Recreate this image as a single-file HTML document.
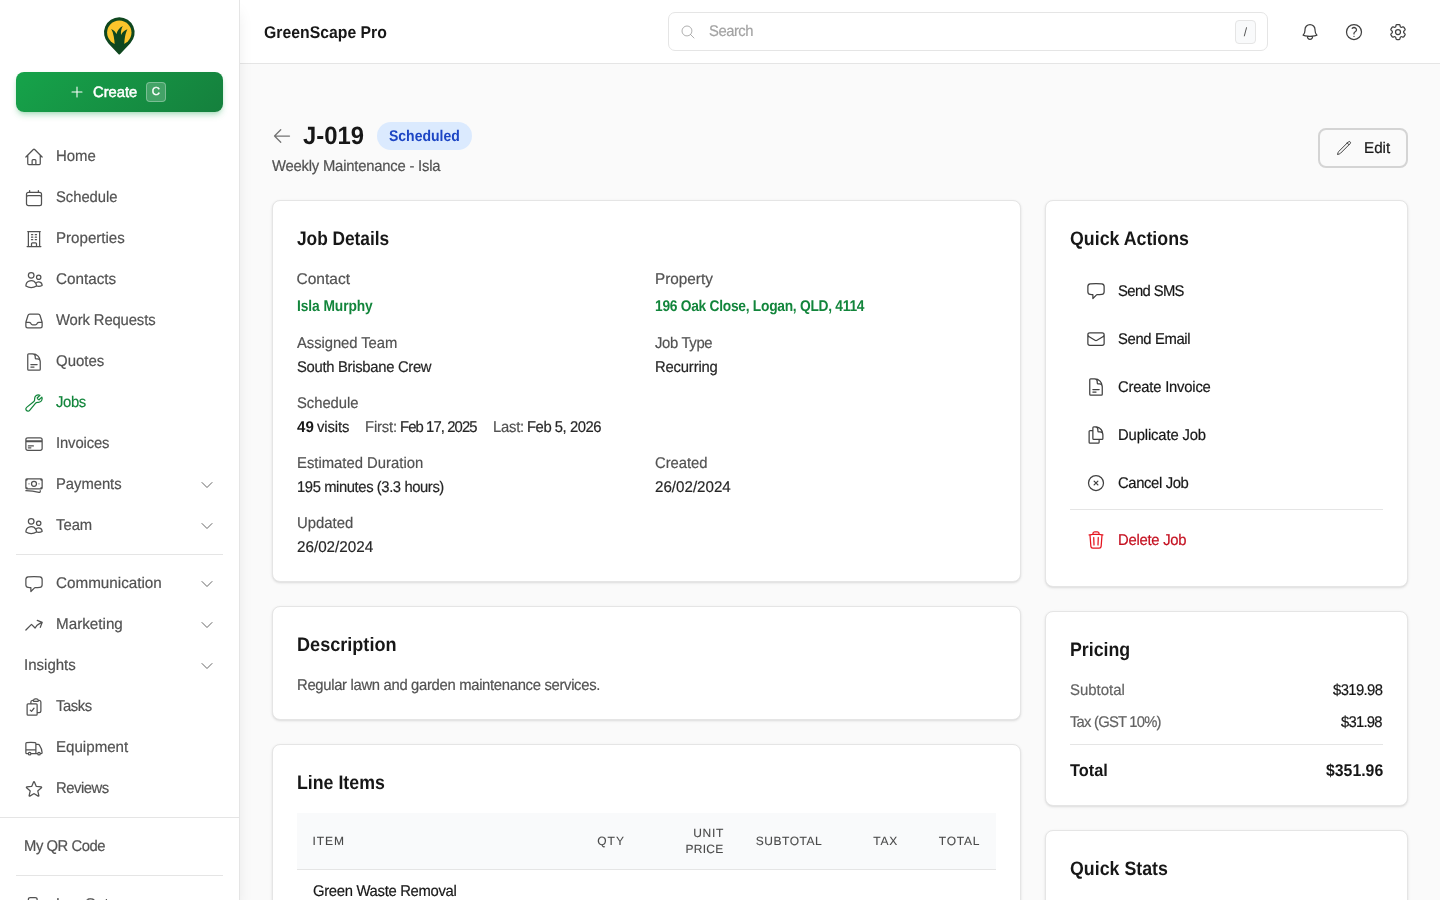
<!DOCTYPE html>
<html lang="en">
<head>
<meta charset="utf-8">
<title>J-019 - GreenScape Pro</title>
<style>
*{box-sizing:border-box;margin:0;padding:0}
html,body{width:1440px;height:900px;overflow:hidden;background:#fafafa}
body{position:relative;text-rendering:geometricPrecision;font-family:"Liberation Sans",sans-serif;color:#171717;font-size:15px;line-height:20px}
svg{display:block}
.ic{fill:none;stroke:currentColor;stroke-width:1.5;stroke-linecap:round;stroke-linejoin:round}
aside,header,main,section,nav,.abs{position:absolute}
.t{position:absolute;white-space:nowrap;-webkit-text-stroke:0.2px currentColor}
.b{-webkit-text-stroke-width:0}
#side{background:#fff;border-right:1px solid #e5e5e5;box-shadow:0 10px 15px -3px rgba(0,0,0,.1),0 4px 6px -4px rgba(0,0,0,.1);z-index:3}
#top{background:#fff;border-bottom:1px solid #e5e5e5;z-index:2}
#main{background:#fafafa;z-index:1;overflow:hidden}
.card{background:#fff;border:1px solid #e5e5e5;border-radius:8px;box-shadow:0 1px 3px 0 rgba(0,0,0,.1),0 1px 2px -1px rgba(0,0,0,.1)}
.hr{position:absolute;height:1px;background:#e5e5e5}
#create{border-radius:8px;background:linear-gradient(135deg,#16a34a 0%,#15803d 100%);box-shadow:0 4px 6px -1px rgba(22,163,74,.28),0 2px 4px -2px rgba(22,163,74,.25);color:#fff}
kbd{font-family:inherit}
h1,h2,h3{font-weight:400;font-size:inherit}
aside,header,main{will-change:transform}
</style>
</head>
<body>
<aside id="side" style="left:0px;top:0px;width:240px;height:900px;">
 <svg class="abs" style="left:96px;top:12px;width:48px;height:48px" viewBox="0 0 48 48"><path d="M23.300 5.300A15.300 15.300 0 0 0 12.260 31.190L22.600 42.200a1 1 0 0 0 1.400 0L34.340 31.190A15.300 15.300 0 0 0 23.300 5.300Z" fill="#0f471f"/><circle cx="23.300" cy="20.600" r="12.200" fill="#fbc52b"/><path d="M18.700 34.500C18.600 27 17.500 21 15.200 17.050c2.500 1 4.200 2.700 5.300 5.050C21.300 18.500 23.300 15.700 26.700 13.950c-1.500 2.900-2 5.800-1.650 8.950 1.300-2.500 3.300-4.400 6.400-5.600-2 3.800-3.100 9-3.200 17.200Z" fill="#0f471f"/></svg>
 <div id="create" class="abs" style="left:16px;top:72px;width:207px;height:40px;">
  <svg class="ic" viewBox="0 0 24 24" style="width:16px;height:16px;position:absolute;left:53px;top:12px;stroke-width:1.6;"><path d="M12 4.5v15m7.5-7.5h-15"/></svg>
  <div class="t" style="top:11px;font-size:15px;line-height:20px;-webkit-text-stroke-width:0.5px;color:#fff;left:76.95px;transform:scaleX(0.9822);transform-origin:0 50%;">Create</div>
  <kbd style="position:absolute;left:130px;top:10px;width:20px;height:20px;border-radius:4px;background:rgba(255,255,255,.2);border:1px solid rgba(255,255,255,.3);font-size:11.5px;line-height:18px;text-align:center;color:#fff;-webkit-text-stroke:0.3px #fff">C</kbd>
 </div>
 <svg class="ic" viewBox="0 0 24 24" style="width:20px;height:20px;position:absolute;left:24px;top:146.7px;color:#525252;"><path d="m2.25 12 8.954-8.955c.44-.439 1.152-.439 1.591 0L21.75 12M4.5 9.75v10.125c0 .621.504 1.125 1.125 1.125H9.750v-4.875c0-.621.504-1.125 1.125-1.125h2.250c.621 0 1.125.504 1.125 1.125V21h4.125c.621 0 1.125-.504 1.125-1.125V9.750M8.250 21h8.250"/></svg>
 <div class="t" style="top:146.5px;font-size:15.5px;line-height:20px;color:#525252;left:55.50px;transform:scaleX(0.9625);transform-origin:0 50%;">Home</div>
 <svg class="ic" viewBox="0 0 24 24" style="width:20px;height:20px;position:absolute;left:24px;top:187.7px;color:#525252;"><path d="M6.75 3v2.25M17.25 3v2.25M3 18.75V7.5a2.25 2.25 0 0 1 2.25-2.25h13.5A2.25 2.25 0 0 1 21 7.5v11.25m-18 0A2.25 2.25 0 0 0 5.25 21h13.5A2.25 2.25 0 0 0 21 18.75m-18 0v-7.5A2.25 2.25 0 0 1 5.25 9h13.5A2.25 2.25 0 0 1 21 11.25v7.5"/></svg>
 <div class="t" style="top:187.5px;font-size:15.5px;line-height:20px;letter-spacing:-0.04px;color:#525252;left:55.50px;transform:scaleX(0.955);transform-origin:0 50%;">Schedule</div>
 <svg class="ic" viewBox="0 0 24 24" style="width:20px;height:20px;position:absolute;left:24px;top:228.7px;color:#525252;"><path d="M3.75 21h16.5M4.5 3h15M5.25 3v18m13.5-18v18M9 6.75h1.5m-1.5 3h1.5m-1.5 3h1.5m3-6H15m-1.5 3H15m-1.5 3H15M9 21v-3.375c0-.621.504-1.125 1.125-1.125h3.75c.621 0 1.125.504 1.125 1.125V21"/></svg>
 <div class="t" style="top:228.5px;font-size:15.5px;line-height:20px;color:#525252;left:55.50px;transform:scaleX(0.9738);transform-origin:0 50%;">Properties</div>
 <svg class="ic" viewBox="0 0 24 24" style="width:20px;height:20px;position:absolute;left:24px;top:269.7px;color:#525252;"><path d="M15 19.128a9.38 9.38 0 0 0 2.625.372 9.337 9.337 0 0 0 4.121-.952 4.125 4.125 0 0 0-7.533-2.493M15 19.128v-.003c0-1.113-.285-2.16-.786-3.07M15 19.128v.106A12.318 12.318 0 0 1 8.624 21c-2.331 0-4.512-.645-6.374-1.766l-.001-.109a6.375 6.375 0 0 1 11.964-3.07M12 6.375a3.375 3.375 0 1 1-6.75 0 3.375 3.375 0 0 1 6.75 0Zm8.25 2.25a2.625 2.625 0 1 1-5.25 0 2.625 2.625 0 0 1 5.25 0Z"/></svg>
 <div class="t" style="top:269.5px;font-size:15.5px;line-height:20px;color:#525252;left:55.50px;transform:scaleX(0.9845);transform-origin:0 50%;">Contacts</div>
 <svg class="ic" viewBox="0 0 24 24" style="width:20px;height:20px;position:absolute;left:24px;top:310.7px;color:#525252;"><path d="M2.25 13.5h3.86a2.25 2.25 0 0 1 2.012 1.244l.256.512a2.25 2.25 0 0 0 2.013 1.244h3.218a2.25 2.25 0 0 0 2.013-1.244l.256-.512a2.25 2.25 0 0 1 2.013-1.244h3.859m-19.5.338V18a2.25 2.25 0 0 0 2.25 2.25h15A2.25 2.25 0 0 0 21.75 18v-4.162c0-.224-.034-.447-.1-.661L19.24 5.338a2.25 2.25 0 0 0-2.15-1.588H6.911a2.25 2.25 0 0 0-2.15 1.588L2.35 13.177a2.25 2.25 0 0 0-.1.661Z"/></svg>
 <div class="t" style="top:310.5px;font-size:15.5px;line-height:20px;letter-spacing:-0.12px;color:#525252;left:55.50px;transform:scaleX(0.955);transform-origin:0 50%;">Work Requests</div>
 <svg class="ic" viewBox="0 0 24 24" style="width:20px;height:20px;position:absolute;left:24px;top:351.7px;color:#525252;"><path d="M19.5 14.25v-2.625a3.375 3.375 0 0 0-3.375-3.375h-1.5A1.125 1.125 0 0 1 13.5 7.125v-1.5a3.375 3.375 0 0 0-3.375-3.375H8.25m0 12.75h7.5m-7.5 3H12M10.5 2.25H5.625c-.621 0-1.125.504-1.125 1.125v17.25c0 .621.504 1.125 1.125 1.125h12.75c.621 0 1.125-.504 1.125-1.125V11.25a9 9 0 0 0-9-9Z"/></svg>
 <div class="t" style="top:351.5px;font-size:15.5px;line-height:20px;color:#525252;left:55.50px;transform:scaleX(0.965);transform-origin:0 50%;">Quotes</div>
 <svg class="ic" viewBox="0 0 24 24" style="width:20px;height:20px;position:absolute;left:24px;top:392.7px;color:#12853b;"><path d="M21.75 6.75a4.5 4.5 0 0 1-4.884 4.484c-1.076-.091-2.264.071-2.95.904l-7.152 8.684a2.548 2.548 0 1 1-3.586-3.586l8.684-7.152c.833-.686.995-1.874.904-2.95a4.5 4.5 0 0 1 6.336-4.486l-3.276 3.276a3.004 3.004 0 0 0 2.25 2.25l3.276-3.276c.256.565.398 1.192.398 1.852Z"/></svg>
 <div class="t" style="top:392.5px;font-size:15.5px;line-height:20px;letter-spacing:-0.38px;color:#12853b;left:55.50px;transform:scaleX(0.955);transform-origin:0 50%;">Jobs</div>
 <svg class="ic" viewBox="0 0 24 24" style="width:20px;height:20px;position:absolute;left:24px;top:433.7px;color:#525252;"><path d="M2.25 8.25h19.5M2.25 9h19.5m-16.5 5.25h6m-6 2.25h3m-3.750 3h15a2.250 2.250 0 0 0 2.250-2.250V6.750A2.250 2.250 0 0 0 19.500 4.500h-15a2.250 2.250 0 0 0-2.250 2.250v10.500A2.250 2.250 0 0 0 4.500 19.500Z"/></svg>
 <div class="t" style="top:433.5px;font-size:15.5px;line-height:20px;letter-spacing:-0.12px;color:#525252;left:55.50px;transform:scaleX(0.955);transform-origin:0 50%;">Invoices</div>
 <svg class="ic" viewBox="0 0 24 24" style="width:20px;height:20px;position:absolute;left:24px;top:474.7px;color:#525252;"><path d="M2.25 18.75a60.07 60.07 0 0 1 15.797 2.101c.727.198 1.453-.342 1.453-1.096V18.75M3.75 4.5v.75A.75.75 0 0 1 3 6h-.75m0 0v-.375c0-.621.504-1.125 1.125-1.125H20.25M2.25 6v9m18-10.5v.75c0 .414.336.75.75.75h.75m-1.5-1.5h.375c.621 0 1.125.504 1.125 1.125v9.75c0 .621-.504 1.125-1.125 1.125h-.375m1.5-1.5H21a.75.75 0 0 0-.75.75v.75m0 0H3.75m0 0h-.375a1.125 1.125 0 0 1-1.125-1.125V15m1.5 1.500v-.750A.750.750 0 0 0 3 15h-.750M15 10.500a3 3 0 1 1-6 0 3 3 0 0 1 6 0Zm3 0h.008v.008H18V10.500Zm-12 0h.008v.008H6V10.500Z"/></svg>
 <div class="t" style="top:474.5px;font-size:15.5px;line-height:20px;letter-spacing:-0.04px;color:#525252;left:55.50px;transform:scaleX(0.955);transform-origin:0 50%;">Payments</div>
 <svg class="ic" viewBox="0 0 24 24" style="width:16px;height:16px;position:absolute;left:199px;top:476.8px;color:#666;"><path d="m19.5 8.25-7.5 7.5-7.5-7.5"/></svg>
 <svg class="ic" viewBox="0 0 24 24" style="width:20px;height:20px;position:absolute;left:24px;top:515.7px;color:#525252;"><path d="M15 19.128a9.38 9.38 0 0 0 2.625.372 9.337 9.337 0 0 0 4.121-.952 4.125 4.125 0 0 0-7.533-2.493M15 19.128v-.003c0-1.113-.285-2.16-.786-3.07M15 19.128v.106A12.318 12.318 0 0 1 8.624 21c-2.331 0-4.512-.645-6.374-1.766l-.001-.109a6.375 6.375 0 0 1 11.964-3.07M12 6.375a3.375 3.375 0 1 1-6.75 0 3.375 3.375 0 0 1 6.75 0Zm8.25 2.25a2.625 2.625 0 1 1-5.25 0 2.625 2.625 0 0 1 5.25 0Z"/></svg>
 <div class="t" style="top:515.5px;font-size:15.5px;line-height:20px;color:#525252;left:55.50px;transform:scaleX(0.9551);transform-origin:0 50%;">Team</div>
 <svg class="ic" viewBox="0 0 24 24" style="width:16px;height:16px;position:absolute;left:199px;top:517.8px;color:#666;"><path d="m19.5 8.25-7.5 7.5-7.5-7.5"/></svg>
 <svg class="ic" viewBox="0 0 24 24" style="width:20px;height:20px;position:absolute;left:24px;top:573.7px;color:#525252;"><path d="M2.25 12.76c0 1.6 1.123 2.994 2.707 3.227 1.087.16 2.185.283 3.293.369V21l4.076-4.076a1.526 1.526 0 0 1 1.037-.443 48.282 48.282 0 0 0 5.68-.494c1.584-.233 2.707-1.626 2.707-3.228V6.741c0-1.602-1.123-2.995-2.707-3.228A48.394 48.394 0 0 0 12 3c-2.392 0-4.744.175-7.043.513C3.373 3.746 2.25 5.14 2.25 6.741v6.018Z"/></svg>
 <div class="t" style="top:573.5px;font-size:15.5px;line-height:20px;color:#525252;left:55.50px;transform:scaleX(0.9824);transform-origin:0 50%;">Communication</div>
 <svg class="ic" viewBox="0 0 24 24" style="width:16px;height:16px;position:absolute;left:199px;top:575.8px;color:#666;"><path d="m19.5 8.25-7.5 7.5-7.5-7.5"/></svg>
 <svg class="ic" viewBox="0 0 24 24" style="width:20px;height:20px;position:absolute;left:24px;top:614.7px;color:#525252;"><path d="M2.25 18 9 11.25l4.306 4.306a11.95 11.95 0 0 1 5.814-5.518l2.74-1.22m0 0-5.94-2.281m5.94 2.28-2.28 5.941"/></svg>
 <div class="t" style="top:614.5px;font-size:15.5px;line-height:20px;color:#525252;left:55.50px;transform:scaleX(0.9816);transform-origin:0 50%;">Marketing</div>
 <svg class="ic" viewBox="0 0 24 24" style="width:16px;height:16px;position:absolute;left:199px;top:616.8px;color:#666;"><path d="m19.5 8.25-7.5 7.5-7.5-7.5"/></svg>
 <div class="t" style="top:655.5px;font-size:15.5px;line-height:20px;color:#525252;left:23.50px;transform:scaleX(0.97);transform-origin:0 50%;">Insights</div>
 <svg class="ic" viewBox="0 0 24 24" style="width:16px;height:16px;position:absolute;left:199px;top:657.8px;color:#666;"><path d="m19.5 8.25-7.5 7.5-7.5-7.5"/></svg>
 <svg class="ic" viewBox="0 0 24 24" style="width:20px;height:20px;position:absolute;left:24px;top:696.7px;color:#525252;"><path d="M11.35 3.836c-.065.21-.1.433-.1.664 0 .414.336.75.75.75h4.5a.75.75 0 0 0 .75-.75 2.25 2.25 0 0 0-.1-.664m-5.8 0A2.251 2.251 0 0 1 13.5 2.25H15c1.012 0 1.867.668 2.15 1.586m-5.8 0c-.376.023-.75.05-1.124.08C9.095 4.01 8.25 4.973 8.25 6.108V8.25m8.9-4.414c.376.023.75.05 1.124.08 1.131.094 1.976 1.057 1.976 2.192V16.5A2.25 2.25 0 0 1 18 18.75h-2.25m-7.5-10.5H4.875c-.621 0-1.125.504-1.125 1.125v11.25c0 .621.504 1.125 1.125 1.125h9.75c.621 0 1.125-.504 1.125-1.125V18.75m-7.5-10.5h6.375c.621 0 1.125.504 1.125 1.125v9.375m-8.25-3 1.5 1.5 3-3.75"/></svg>
 <div class="t" style="top:696.5px;font-size:15.5px;line-height:20px;letter-spacing:-0.42px;color:#525252;left:55.50px;transform:scaleX(0.955);transform-origin:0 50%;">Tasks</div>
 <svg class="ic" viewBox="0 0 24 24" style="width:20px;height:20px;position:absolute;left:24px;top:737.7px;color:#525252;"><path d="M8.25 18.75a1.5 1.5 0 0 1-3 0m3 0a1.5 1.5 0 0 0-3 0m3 0h6m-9 0H3.375a1.125 1.125 0 0 1-1.125-1.125V14.25m17.25 4.5a1.5 1.5 0 0 1-3 0m3 0a1.5 1.5 0 0 0-3 0m3 0h1.125c.621 0 1.129-.504 1.09-1.124a17.902 17.902 0 0 0-3.213-9.193 2.056 2.056 0 0 0-1.58-.86H14.25M16.5 18.75h-2.25m0-11.177v-.958c0-.568-.422-1.048-.987-1.106a48.554 48.554 0 0 0-10.026 0 1.106 1.106 0 0 0-.987 1.106v7.635m12-6.677v6.677m0 4.500v-4.500m0 0h-12"/></svg>
 <div class="t" style="top:737.5px;font-size:15.5px;line-height:20px;color:#525252;left:55.50px;transform:scaleX(0.9744);transform-origin:0 50%;">Equipment</div>
 <svg class="ic" viewBox="0 0 24 24" style="width:20px;height:20px;position:absolute;left:24px;top:778.7px;color:#525252;"><path d="M11.48 3.499a.562.562 0 0 1 1.04 0l2.125 5.111a.563.563 0 0 0 .475.345l5.518.442c.499.04.701.663.321.988l-4.204 3.602a.563.563 0 0 0-.182.557l1.285 5.385a.562.562 0 0 1-.84.61l-4.725-2.885a.562.562 0 0 0-.586 0L6.982 20.54a.562.562 0 0 1-.84-.61l1.285-5.386a.562.562 0 0 0-.182-.557l-4.204-3.602a.562.562 0 0 1 .321-.988l5.518-.442a.563.563 0 0 0 .475-.345L11.480 3.500Z"/></svg>
 <div class="t" style="top:778.5px;font-size:15.5px;line-height:20px;letter-spacing:-0.47px;color:#525252;left:55.50px;transform:scaleX(0.955);transform-origin:0 50%;">Reviews</div>
 <div class="t" style="top:836.5px;font-size:15.5px;line-height:20px;letter-spacing:-0.47px;color:#525252;left:23.50px;transform:scaleX(0.955);transform-origin:0 50%;">My QR Code</div>
 <svg class="ic" viewBox="0 0 24 24" style="width:20px;height:20px;position:absolute;left:24px;top:894.7px;color:#525252;"><path d="M15.75 9V5.25A2.25 2.25 0 0 0 13.5 3h-6a2.25 2.25 0 0 0-2.25 2.25v13.5A2.25 2.25 0 0 0 7.5 21h6a2.25 2.25 0 0 0 2.25-2.25V15m3 0 3-3m0 0-3-3m3 3H9"/></svg>
 <div class="t" style="top:894.5px;font-size:15.5px;line-height:20px;letter-spacing:-0.03px;color:#525252;left:55.50px;transform:scaleX(0.955);transform-origin:0 50%;">Log Out</div>
 <div style="position:absolute;left:16px;top:554px;width:207px;height:1px;background:#e5e5e5"></div>
 <div style="position:absolute;left:0px;top:817px;width:239px;height:1px;background:#e5e5e5"></div>
 <div style="position:absolute;left:16px;top:875px;width:207px;height:1px;background:#e5e5e5"></div>
</aside>
<header id="top" style="left:240px;top:0px;width:1200px;height:64px;">
 <div class="t" style="top:20.8px;font-size:17px;line-height:24px;font-weight:700;-webkit-text-stroke-width:0;left:23.80px;transform:scaleX(0.9289);transform-origin:0 50%;">GreenScape Pro</div>
 <div class="abs" style="left:428px;top:12px;width:600px;height:39px;border:1px solid #e5e5e5;border-radius:7px;background:#fff;">
  <svg class="ic" viewBox="0 0 24 24" style="width:16px;height:16px;position:absolute;left:11px;top:11px;color:#a3a3a3;stroke-width:1.3;"><path d="m21 21-5.197-5.197m0 0A7.5 7.5 0 1 0 5.196 5.196a7.5 7.5 0 0 0 10.607 10.607Z"/></svg>
  <div class="t" style="top:8.8px;font-size:15.5px;line-height:20px;letter-spacing:-0.5px;color:#a3a3a3;left:39.80px;transform:scaleX(0.955);transform-origin:0 50%;">Search</div>
  <kbd style="position:absolute;left:566px;top:7px;width:21px;height:24px;border:1px solid #e5e5e5;border-radius:4px;background:#f9fafb;font-size:12px;line-height:22px;text-align:center;color:#525252">/</kbd>
 </div>
 <svg class="ic" viewBox="0 0 24 24" style="width:20px;height:20px;position:absolute;left:1060px;top:22px;color:#404040;"><path d="M14.857 17.082a23.848 23.848 0 0 0 5.454-1.31A8.967 8.967 0 0 1 18 9.75V9A6 6 0 0 0 6 9v.75a8.967 8.967 0 0 1-2.312 6.022c1.733.64 3.56 1.085 5.455 1.31m5.714 0a24.255 24.255 0 0 1-5.714 0m5.714 0a3 3 0 1 1-5.714 0"/></svg>
 <svg class="ic" viewBox="0 0 24 24" style="width:20px;height:20px;position:absolute;left:1104px;top:22px;color:#404040;"><path d="M9.879 7.519c1.171-1.025 3.071-1.025 4.242 0 1.172 1.025 1.172 2.687 0 3.712-.203.179-.43.326-.67.442-.745.361-1.45.999-1.45 1.827v.75M21 12a9 9 0 1 1-18 0 9 9 0 0 1 18 0Zm-9 5.25h.008v.008H12v-.008Z"/></svg>
 <svg class="ic" viewBox="0 0 24 24" style="width:20px;height:20px;position:absolute;left:1148px;top:22px;color:#404040;"><path d="M9.594 3.94c.09-.542.56-.94 1.11-.94h2.593c.55 0 1.02.398 1.11.94l.213 1.281c.063.374.313.686.645.87.074.04.147.083.22.127.325.196.72.257 1.075.124l1.217-.456a1.125 1.125 0 0 1 1.37.49l1.296 2.247a1.125 1.125 0 0 1-.26 1.431l-1.003.827c-.293.241-.438.613-.43.992a7.723 7.723 0 0 1 0 .255c-.008.378.137.75.43.991l1.004.827c.424.35.534.955.26 1.43l-1.298 2.247a1.125 1.125 0 0 1-1.369.491l-1.217-.456c-.355-.133-.75-.072-1.076.124a6.470 6.470 0 0 1-.22.128c-.331.183-.581.495-.644.869l-.213 1.281c-.09.543-.56.940-1.110.940h-2.594c-.550 0-1.019-.398-1.110-.940l-.213-1.281c-.062-.374-.312-.686-.644-.870a6.520 6.520 0 0 1-.220-.127c-.325-.196-.720-.257-1.076-.124l-1.217.456a1.125 1.125 0 0 1-1.369-.490l-1.297-2.247a1.125 1.125 0 0 1 .260-1.431l1.004-.827c.292-.240.437-.613.430-.991a6.932 6.932 0 0 1 0-.255c.007-.380-.138-.751-.430-.992l-1.004-.827a1.125 1.125 0 0 1-.260-1.430l1.297-2.247a1.125 1.125 0 0 1 1.370-.491l1.216.456c.356.133.751.072 1.076-.124.072-.044.146-.086.220-.128.332-.183.582-.495.644-.869l.214-1.280Z M15 12a3 3 0 1 1-6 0 3 3 0 0 1 6 0Z"/></svg>
</header>
<main id="main" style="left:240px;top:64px;width:1200px;height:836px;">
 <svg class="ic" viewBox="0 0 24 24" style="width:20px;height:20px;position:absolute;left:32px;top:62px;color:#737373;"><path d="M10.5 19.5 3 12m0 0 7.5-7.5M3 12h18"/></svg>
 <h1 class="t" style="top:56.2px;font-size:25px;line-height:32px;font-weight:700;-webkit-text-stroke-width:0;left:63.20px;transform:scaleX(0.9539);transform-origin:0 50%;">J-019</h1>
 <div style="position:absolute;left:137px;top:58px;width:95px;height:28px;border-radius:14px;background:#dbeafe"></div>
 <div class="t" style="top:62.8px;font-size:15.5px;line-height:20px;font-weight:700;-webkit-text-stroke-width:0;color:#1c45c4;left:148.70px;transform:scaleX(0.9031);transform-origin:0 50%;">Scheduled</div>
 <div class="t" style="top:92.8px;font-size:15.5px;line-height:20px;letter-spacing:-0.21px;color:#525252;left:32.30px;transform:scaleX(0.955);transform-origin:0 50%;">Weekly Maintenance - Isla</div>
 <div class="abs" style="left:1078px;top:64px;width:90px;height:40px;border:2px solid #d4d4d4;border-radius:8px;background:#fafafa;">
  <svg class="ic" viewBox="0 0 24 24" style="width:16px;height:16px;position:absolute;left:16px;top:10px;color:#404040;"><path d="m16.862 4.487 1.687-1.688a1.875 1.875 0 1 1 2.652 2.652L6.832 19.82a4.5 4.5 0 0 1-1.897 1.13l-2.685.8.8-2.685a4.5 4.5 0 0 1 1.13-1.897L16.863 4.487Zm0 0L19.5 7.125"/></svg>
  <div class="t" style="top:8.8px;font-size:15.5px;line-height:20px;color:#171717;left:43.80px;transform:scaleX(0.9813);transform-origin:0 50%;">Edit</div>
 </div>
 <section class="card" style="left:32px;top:136px;width:749px;height:382px;">
  <h2 class="t" style="top:25.8px;font-size:19.5px;line-height:24px;letter-spacing:-0.05px;font-weight:700;-webkit-text-stroke-width:0;left:23.50px;transform:scaleX(0.89);transform-origin:0 50%;">Job Details</h2>
  <div class="t" style="top:68.8px;font-size:15.5px;line-height:20px;letter-spacing:0.02px;color:#525252;left:23.50px;">Contact</div>
  <div class="t" style="top:95.8px;font-size:15.5px;line-height:20px;letter-spacing:-0.1px;font-weight:700;-webkit-text-stroke-width:0;color:#12853b;left:23.50px;transform:scaleX(0.89);transform-origin:0 50%;">Isla Murphy</div>
  <div class="t" style="top:68.8px;font-size:15.5px;line-height:20px;color:#525252;left:381.50px;transform:scaleX(0.9863);transform-origin:0 50%;">Property</div>
  <div class="t" style="top:95.8px;font-size:15.5px;line-height:20px;letter-spacing:-0.31px;font-weight:700;-webkit-text-stroke-width:0;color:#12853b;left:381.50px;transform:scaleX(0.89);transform-origin:0 50%;">196 Oak Close, Logan, QLD, 4114</div>
  <div class="t" style="top:132.8px;font-size:15.5px;line-height:20px;letter-spacing:-0.06px;color:#525252;left:23.50px;transform:scaleX(0.955);transform-origin:0 50%;">Assigned Team</div>
  <div class="t" style="top:156.8px;font-size:15.5px;line-height:20px;letter-spacing:-0.31px;color:#262626;left:23.50px;transform:scaleX(0.955);transform-origin:0 50%;">South Brisbane Crew</div>
  <div class="t" style="top:132.8px;font-size:15.5px;line-height:20px;letter-spacing:-0.34px;color:#525252;left:381.50px;transform:scaleX(0.955);transform-origin:0 50%;">Job Type</div>
  <div class="t" style="top:156.8px;font-size:15.5px;line-height:20px;letter-spacing:-0.18px;color:#262626;left:381.50px;transform:scaleX(0.955);transform-origin:0 50%;">Recurring</div>
  <div class="t" style="top:192.8px;font-size:15.5px;line-height:20px;letter-spacing:-0.04px;color:#525252;left:23.50px;transform:scaleX(0.955);transform-origin:0 50%;">Schedule</div>
  <div class="t" style="top:216.8px;font-size:15.5px;line-height:20px;font-weight:700;-webkit-text-stroke-width:0;color:#171717;left:23.50px;transform:scaleX(0.9739);transform-origin:0 50%;">49</div>
  <div class="t" style="top:216.8px;font-size:15.5px;line-height:20px;letter-spacing:-0.08px;color:#262626;left:43.80px;transform:scaleX(0.955);transform-origin:0 50%;">visits</div>
  <div class="t" style="top:216.8px;font-size:15.5px;line-height:20px;letter-spacing:-0.17px;color:#525252;left:92.20px;transform:scaleX(0.955);transform-origin:0 50%;">First:</div>
  <div class="t" style="top:216.8px;font-size:15.5px;line-height:20px;letter-spacing:-0.93px;color:#262626;left:126.80px;transform:scaleX(0.955);transform-origin:0 50%;">Feb 17, 2025</div>
  <div class="t" style="top:216.8px;font-size:15.5px;line-height:20px;letter-spacing:-0.23px;color:#525252;left:219.80px;transform:scaleX(0.955);transform-origin:0 50%;">Last:</div>
  <div class="t" style="top:216.8px;font-size:15.5px;line-height:20px;letter-spacing:-0.47px;color:#262626;left:253.50px;transform:scaleX(0.955);transform-origin:0 50%;">Feb 5, 2026</div>
  <div class="t" style="top:252.8px;font-size:15.5px;line-height:20px;color:#525252;left:23.50px;transform:scaleX(0.9575);transform-origin:0 50%;">Estimated Duration</div>
  <div class="t" style="top:276.8px;font-size:15.5px;line-height:20px;letter-spacing:-0.43px;color:#262626;left:23.50px;transform:scaleX(0.955);transform-origin:0 50%;">195 minutes (3.3 hours)</div>
  <div class="t" style="top:252.8px;font-size:15.5px;line-height:20px;letter-spacing:-0.03px;color:#525252;left:381.50px;transform:scaleX(0.955);transform-origin:0 50%;">Created</div>
  <div class="t" style="top:276.8px;font-size:15.5px;line-height:20px;color:#262626;left:381.50px;transform:scaleX(0.9768);transform-origin:0 50%;">26/02/2024</div>
  <div class="t" style="top:312.8px;font-size:15.5px;line-height:20px;color:#525252;left:23.50px;transform:scaleX(0.959);transform-origin:0 50%;">Updated</div>
  <div class="t" style="top:336.8px;font-size:15.5px;line-height:20px;color:#262626;left:23.50px;transform:scaleX(0.982);transform-origin:0 50%;">26/02/2024</div>
 </section>
 <section class="card" style="left:32px;top:542px;width:749px;height:114px;">
  <h2 class="t" style="top:25.8px;font-size:19.5px;line-height:24px;font-weight:700;-webkit-text-stroke-width:0;left:23.50px;transform:scaleX(0.9277);transform-origin:0 50%;">Description</h2>
  <p class="t" style="top:68.8px;font-size:15.5px;line-height:20px;letter-spacing:-0.32px;color:#525252;left:23.50px;transform:scaleX(0.955);transform-origin:0 50%;">Regular lawn and garden maintenance services.</p>
 </section>
 <section class="card" style="left:32px;top:680px;width:749px;height:400px;">
  <h2 class="t" style="top:25.8px;font-size:19.5px;line-height:24px;font-weight:700;-webkit-text-stroke-width:0;left:23.50px;transform:scaleX(0.9103);transform-origin:0 50%;">Line Items</h2>
  <div style="position:absolute;left:24px;top:68px;width:699px;height:57px;background:#f9fafb;border-bottom:1px solid #e5e5e5"></div>
  <div class="t" style="top:88.3px;font-size:12px;line-height:16px;letter-spacing:0.95px;color:#4a4a4a;left:39.50px;-webkit-text-stroke-width:0.1px;">ITEM</div>
  <div class="t" style="top:88.3px;font-size:12px;line-height:16px;letter-spacing:1.08px;color:#4a4a4a;left:324.20px;-webkit-text-stroke-width:0.1px;">QTY</div>
  <div class="t" style="top:80.3px;font-size:12px;line-height:16px;letter-spacing:0.7px;color:#4a4a4a;left:420.20px;-webkit-text-stroke-width:0.1px;">UNIT</div>
  <div class="t" style="top:96.3px;font-size:12px;line-height:16px;letter-spacing:0.27px;color:#4a4a4a;left:412.50px;-webkit-text-stroke-width:0.1px;">PRICE</div>
  <div class="t" style="top:88.3px;font-size:12px;line-height:16px;letter-spacing:0.52px;color:#4a4a4a;left:482.80px;-webkit-text-stroke-width:0.1px;">SUBTOTAL</div>
  <div class="t" style="top:88.3px;font-size:12px;line-height:16px;letter-spacing:0.83px;color:#4a4a4a;left:600.20px;-webkit-text-stroke-width:0.1px;">TAX</div>
  <div class="t" style="top:88.3px;font-size:12px;line-height:16px;letter-spacing:0.74px;color:#4a4a4a;left:665.80px;-webkit-text-stroke-width:0.1px;">TOTAL</div>
  <div class="t" style="top:137.3px;font-size:15.5px;line-height:20px;letter-spacing:-0.31px;color:#171717;left:39.50px;transform:scaleX(0.955);transform-origin:0 50%;">Green Waste Removal</div>
 </section>
 <section class="card" style="left:805px;top:136px;width:363px;height:387px;">
  <h2 class="t" style="top:25.8px;font-size:19.5px;line-height:24px;font-weight:700;-webkit-text-stroke-width:0;left:23.80px;transform:scaleX(0.9118);transform-origin:0 50%;">Quick Actions</h2>
  <svg class="ic" viewBox="0 0 24 24" style="width:20px;height:20px;position:absolute;left:40px;top:80px;color:#404040;"><path d="M2.25 12.76c0 1.6 1.123 2.994 2.707 3.227 1.087.16 2.185.283 3.293.369V21l4.076-4.076a1.526 1.526 0 0 1 1.037-.443 48.282 48.282 0 0 0 5.68-.494c1.584-.233 2.707-1.626 2.707-3.228V6.741c0-1.602-1.123-2.995-2.707-3.228A48.394 48.394 0 0 0 12 3c-2.392 0-4.744.175-7.043.513C3.373 3.746 2.25 5.14 2.25 6.741v6.018Z"/></svg>
  <div class="t" style="top:80.8px;font-size:15.5px;line-height:20px;letter-spacing:-0.64px;color:#171717;left:72.20px;transform:scaleX(0.955);transform-origin:0 50%;">Send SMS</div>
  <svg class="ic" viewBox="0 0 24 24" style="width:20px;height:20px;position:absolute;left:40px;top:128px;color:#404040;"><path d="M21.75 6.75v10.5a2.25 2.25 0 0 1-2.25 2.25h-15a2.25 2.25 0 0 1-2.25-2.25V6.75m19.5 0A2.25 2.25 0 0 0 19.5 4.5h-15a2.25 2.25 0 0 0-2.25 2.25m19.5 0v.243a2.25 2.25 0 0 1-1.07 1.916l-7.5 4.615a2.25 2.25 0 0 1-2.36 0L3.32 8.91a2.25 2.25 0 0 1-1.07-1.916V6.75"/></svg>
  <div class="t" style="top:128.8px;font-size:15.5px;line-height:20px;letter-spacing:-0.37px;color:#171717;left:72.20px;transform:scaleX(0.955);transform-origin:0 50%;">Send Email</div>
  <svg class="ic" viewBox="0 0 24 24" style="width:20px;height:20px;position:absolute;left:40px;top:176px;color:#404040;"><path d="M19.5 14.25v-2.625a3.375 3.375 0 0 0-3.375-3.375h-1.5A1.125 1.125 0 0 1 13.5 7.125v-1.5a3.375 3.375 0 0 0-3.375-3.375H8.25m0 12.75h7.5m-7.5 3H12M10.5 2.25H5.625c-.621 0-1.125.504-1.125 1.125v17.25c0 .621.504 1.125 1.125 1.125h12.75c.621 0 1.125-.504 1.125-1.125V11.25a9 9 0 0 0-9-9Z"/></svg>
  <div class="t" style="top:176.8px;font-size:15.5px;line-height:20px;letter-spacing:-0.21px;color:#171717;left:72.20px;transform:scaleX(0.955);transform-origin:0 50%;">Create Invoice</div>
  <svg class="ic" viewBox="0 0 24 24" style="width:20px;height:20px;position:absolute;left:40px;top:224px;color:#404040;"><path d="M15.75 17.25v3.375c0 .621-.504 1.125-1.125 1.125h-9.75a1.125 1.125 0 0 1-1.125-1.125V7.875c0-.621.504-1.125 1.125-1.125H6.75a9.06 9.06 0 0 1 1.5.124m7.5 10.376h3.375c.621 0 1.125-.504 1.125-1.125V11.25c0-4.46-3.243-8.161-7.5-8.876a9.06 9.06 0 0 0-1.5-.124H9.375c-.621 0-1.125.504-1.125 1.125v3.5m7.5 10.375H9.375a1.125 1.125 0 0 1-1.125-1.125v-9.25m12 6.625v-1.875a3.375 3.375 0 0 0-3.375-3.375h-1.5a1.125 1.125 0 0 1-1.125-1.125v-1.5a3.375 3.375 0 0 0-3.375-3.375H9.75"/></svg>
  <div class="t" style="top:224.8px;font-size:15.5px;line-height:20px;letter-spacing:-0.14px;color:#171717;left:72.20px;transform:scaleX(0.955);transform-origin:0 50%;">Duplicate Job</div>
  <svg class="ic" viewBox="0 0 24 24" style="width:20px;height:20px;position:absolute;left:40px;top:272px;color:#404040;"><path d="m9.75 9.75 4.5 4.5m0-4.5-4.5 4.5M21 12a9 9 0 1 1-18 0 9 9 0 0 1 18 0Z"/></svg>
  <div class="t" style="top:272.8px;font-size:15.5px;line-height:20px;letter-spacing:-0.38px;color:#171717;left:72.20px;transform:scaleX(0.955);transform-origin:0 50%;">Cancel Job</div>
  <div style="position:absolute;left:24px;top:308px;width:313px;height:1px;background:#e5e5e5"></div>
  <svg class="ic" viewBox="0 0 24 24" style="width:20px;height:20px;position:absolute;left:40px;top:329px;color:#e5141f;"><path d="m14.74 9-.346 9m-4.788 0L9.26 9m9.968-3.21c.342.052.682.107 1.022.166m-1.022-.165L18.16 19.673a2.25 2.25 0 0 1-2.244 2.077H8.084a2.25 2.25 0 0 1-2.244-2.077L4.772 5.79m14.456 0a48.108 48.108 0 0 0-3.478-.397m-12 .562c.34-.059.68-.114 1.022-.165m0 0a48.11 48.11 0 0 1 3.478-.397m7.5 0v-.916c0-1.18-.91-2.164-2.09-2.201a51.964 51.964 0 0 0-3.32 0c-1.18.037-2.09 1.022-2.09 2.201v.916m7.5 0a48.667 48.667 0 0 0-7.5 0"/></svg>
  <div class="t" style="top:329.8px;font-size:15.5px;line-height:20px;letter-spacing:-0.26px;color:#c40f1f;left:72.20px;transform:scaleX(0.955);transform-origin:0 50%;">Delete Job</div>
 </section>
 <section class="card" style="left:805px;top:547px;width:363px;height:195px;">
  <h2 class="t" style="top:26.1px;font-size:19.5px;line-height:24px;font-weight:700;-webkit-text-stroke-width:0;left:23.80px;transform:scaleX(0.9107);transform-origin:0 50%;">Pricing</h2>
  <div class="t" style="top:68.8px;font-size:15.5px;line-height:20px;color:#636363;left:23.80px;transform:scaleX(0.9649);transform-origin:0 50%;">Subtotal</div>
  <div class="t" style="top:68.8px;font-size:15.5px;line-height:20px;letter-spacing:-0.63px;color:#171717;left:286.80px;transform:scaleX(0.955);transform-origin:0 50%;">$319.98</div>
  <div class="t" style="top:100.8px;font-size:15.5px;line-height:20px;letter-spacing:-0.82px;color:#636363;left:23.80px;transform:scaleX(0.955);transform-origin:0 50%;">Tax (GST 10%)</div>
  <div class="t" style="top:100.8px;font-size:15.5px;line-height:20px;letter-spacing:-0.79px;color:#171717;left:295.20px;transform:scaleX(0.955);transform-origin:0 50%;">$31.98</div>
  <div style="position:absolute;left:24px;top:132px;width:313px;height:1px;background:#e5e5e5"></div>
  <div class="t" style="top:146.5px;font-size:17px;line-height:24px;font-weight:700;-webkit-text-stroke-width:0;color:#171717;left:23.80px;transform:scaleX(0.9632);transform-origin:0 50%;">Total</div>
  <div class="t" style="top:146.5px;font-size:17px;line-height:24px;font-weight:700;-webkit-text-stroke-width:0;color:#171717;left:279.50px;transform:scaleX(0.9308);transform-origin:0 50%;">$351.96</div>
 </section>
 <section class="card" style="left:805px;top:766px;width:363px;height:200px;">
  <h2 class="t" style="top:26.1px;font-size:19.5px;line-height:24px;font-weight:700;-webkit-text-stroke-width:0;left:23.80px;transform:scaleX(0.9124);transform-origin:0 50%;">Quick Stats</h2>
 </section>
</main>
</body>
</html>
